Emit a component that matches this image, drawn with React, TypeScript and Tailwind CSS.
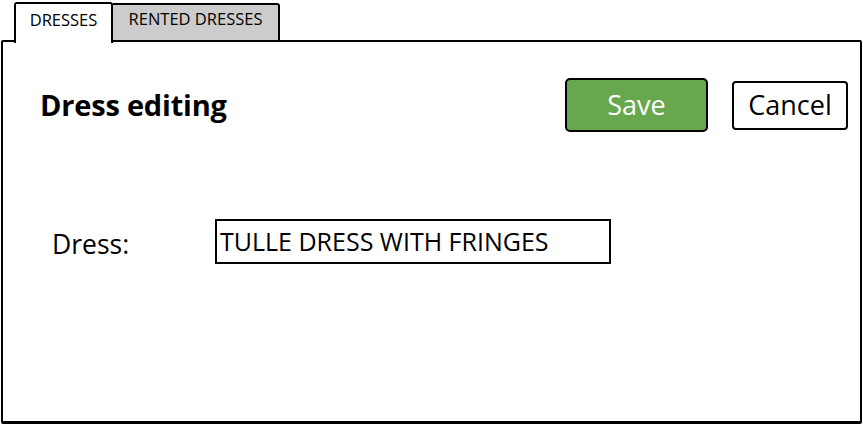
export default function App() {
  return (
    <div className="w-[863px] h-[428px] bg-white overflow-hidden text-black font-['Open_Sans','Noto_Sans',sans-serif]">
      <div className="flex pl-[14px] pt-[1px] h-[42px] items-end relative z-10">
        <div className="w-[99px] h-[41px] bg-white border-2 border-b-0 border-black rounded-t-[3px] flex items-start justify-center pt-[4px] text-[16.5px] -mb-[1px] relative z-10">
          DRESSES
        </div>
        <div className="w-[167px] h-[39px] bg-[#cccccc] border-2 border-l-0 border-black rounded-tr-[3px] flex items-start justify-center pt-[2px] text-[16.5px]">
          RENTED DRESSES
        </div>
      </div>
      <div className="ml-[1px] -mt-[2px] w-[861px] h-[384px] border-2 border-black border-b-[3px] rounded-[2px] flex flex-col">
        <div className="flex items-center pl-[37px] pr-[12px] pt-[36px]">
          <div className="text-[29px] font-bold flex-1 tracking-[-0.2px]">Dress editing</div>
          <button className="w-[143px] h-[54px] bg-[#67a84f] border-2 border-black rounded-[5px] text-white text-[27px] flex items-center justify-center">Save</button>
          <button className="ml-[24px] w-[116px] h-[49px] bg-white border-2 border-black rounded-[4px] text-[27px] flex items-center justify-center">Cancel</button>
        </div>
        <div className="flex items-center mt-[87px] pl-[49px]">
          <div className="w-[163px] text-[26.5px] pt-[6px]">Dress:</div>
          <div className="w-[396px] h-[45px] border-2 border-black flex items-center pl-[3px] text-[25px]">TULLE DRESS WITH FRINGES</div>
        </div>
      </div>
    </div>
  );
}
